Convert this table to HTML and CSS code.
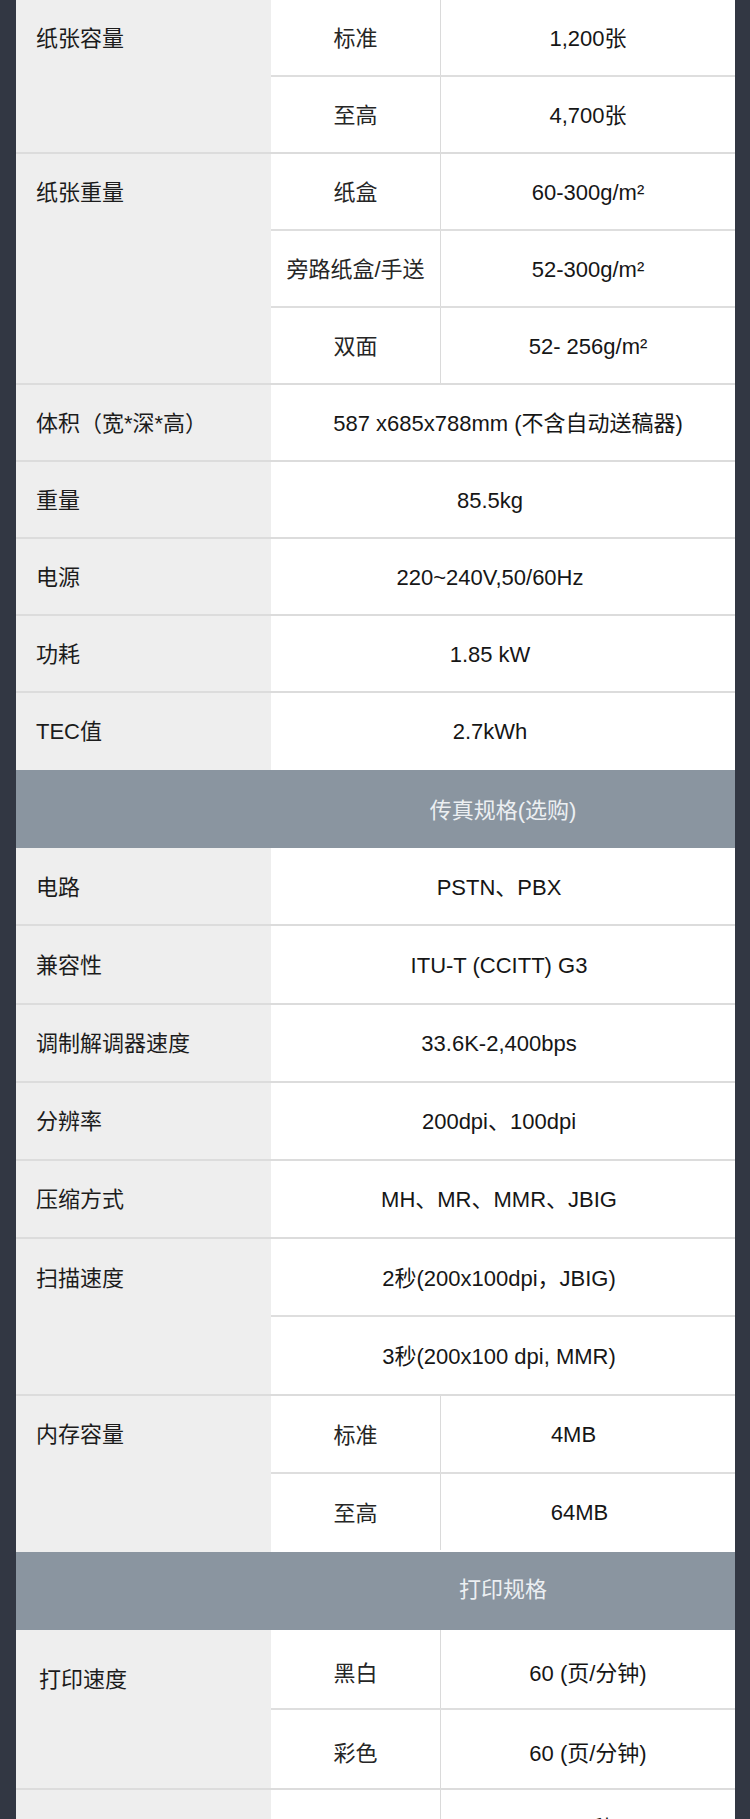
FILE: index.html
```html
<!DOCTYPE html>
<html lang="zh-CN">
<head>
<meta charset="utf-8">
<title>规格参数</title>
<link rel="stylesheet" href="styles.css">
</head>
<body>
<div class="sheet">
  <section class="sec sec1">
    <div class="row">
      <div class="label"><span class="lt">纸张容量</span></div>
      <div class="subs">
        <div class="sub"><div class="k">标准</div><div class="v">1,200张</div></div>
        <div class="sub"><div class="k">至高</div><div class="v">4,700张</div></div>
      </div>
    </div>
    <div class="row">
      <div class="label"><span class="lt">纸张重量</span></div>
      <div class="subs">
        <div class="sub"><div class="k">纸盒</div><div class="v">60-300g/m²</div></div>
        <div class="sub"><div class="k">旁路纸盒/手送</div><div class="v">52-300g/m²</div></div>
        <div class="sub"><div class="k">双面</div><div class="v">52- 256g/m²</div></div>
      </div>
    </div>
    <div class="row">
      <div class="label"><span class="lt">体积（宽*深*高）</span></div>
      <div class="full full-wide">587 x685x788mm (不含自动送稿器)</div>
    </div>
    <div class="row">
      <div class="label"><span class="lt">重量</span></div>
      <div class="full">85.5kg</div>
    </div>
    <div class="row">
      <div class="label"><span class="lt">电源</span></div>
      <div class="full">220~240V,50/60Hz</div>
    </div>
    <div class="row">
      <div class="label"><span class="lt">功耗</span></div>
      <div class="full">1.85 kW</div>
    </div>
    <div class="row row-last">
      <div class="label"><span class="lt">TEC值</span></div>
      <div class="full">2.7kWh</div>
    </div>
  </section>

  <div class="head head1"><span class="head-t">传真规格(选购)</span></div>

  <section class="sec sec2">
    <div class="row">
      <div class="label"><span class="lt">电路</span></div>
      <div class="full">PSTN、PBX</div>
    </div>
    <div class="row">
      <div class="label"><span class="lt">兼容性</span></div>
      <div class="full">ITU-T (CCITT) G3</div>
    </div>
    <div class="row">
      <div class="label"><span class="lt">调制解调器速度</span></div>
      <div class="full">33.6K-2,400bps</div>
    </div>
    <div class="row">
      <div class="label"><span class="lt">分辨率</span></div>
      <div class="full">200dpi、100dpi</div>
    </div>
    <div class="row">
      <div class="label"><span class="lt">压缩方式</span></div>
      <div class="full">MH、MR、MMR、JBIG</div>
    </div>
    <div class="row">
      <div class="label"><span class="lt">扫描速度</span></div>
      <div class="subs">
        <div class="sub"><div class="vv">2秒(200x100dpi，JBIG)</div></div>
        <div class="sub"><div class="vv">3秒(200x100 dpi, MMR)</div></div>
      </div>
    </div>
    <div class="row row-last">
      <div class="label"><span class="lt">内存容量</span></div>
      <div class="subs">
        <div class="sub"><div class="k">标准</div><div class="v v-mem1">4MB</div></div>
        <div class="sub"><div class="k">至高</div><div class="v v-mem2">64MB</div></div>
      </div>
    </div>
  </section>

  <div class="head head2"><span class="head-t">打印规格</span></div>

  <section class="sec sec3">
    <div class="row">
      <div class="label label-alt"><span class="lt">打印速度</span></div>
      <div class="subs">
        <div class="sub"><div class="k">黑白</div><div class="v">60 (页/分钟)</div></div>
        <div class="sub"><div class="k">彩色</div><div class="v">60 (页/分钟)</div></div>
      </div>
    </div>
    <div class="row">
      <div class="label label-alt"><span class="lt">首页输出时间</span></div>
      <div class="subs">
        <div class="sub sub-tall"><div class="k">黑白</div><div class="v v-two">3.7秒<br>(A4 纵向)</div></div>
        <div class="sub"><div class="k">彩色</div><div class="v">5.3秒</div></div>
      </div>
    </div>
  </section>
</div>
</body>
</html>
```

FILE: styles.css
```css
html, body {
  margin: 0;
  padding: 0;
}

body {
  background: #323743;
  font-family: "Liberation Sans", "Noto Sans CJK SC", sans-serif;
  font-size: 22px;
  color: #161616;
  overflow: hidden;
}

.sheet {
  margin: 0 15px 0 16px;
  background: #fff;
}

.sec1 { --h: 75px; }
.sec2 { --h: 76.2px; }
.sec3 { --h: 77.75px; }

.row {
  display: flex;
  border-bottom: 2px solid #dcdcdc;
}

.row-last {
  border-bottom: none;
}

.row-last .subs,
.row-last .label {
  padding-bottom: 2px;
}

.label {
  width: 255px;
  flex: none;
  box-sizing: border-box;
  background: #eeeeee;
  padding-left: 20px;
  color: #1c1c1c;
}

.lt {
  height: var(--h);
  display: flex;
  align-items: center;
  line-height: 1.2;
  padding-top: 3px;
  box-sizing: border-box;
}

.label-alt {
  padding-left: 23px;
}

.label-alt .lt {
  padding-top: 21px;
}

.subs {
  flex: 1;
  display: flex;
  flex-direction: column;
}

.sub {
  display: flex;
  height: var(--h);
}

.sub + .sub {
  border-top: 2px solid #dedede;
}

.k {
  width: 170px;
  flex: none;
  box-sizing: border-box;
  border-right: 1px solid #dadada;
  display: flex;
  align-items: center;
  justify-content: center;
  color: #262626;
  line-height: 1.2;
  padding-top: 4px;
}

.v,
.vv,
.full {
  flex: 1;
  display: flex;
  align-items: center;
  justify-content: center;
  padding-top: 3px;
  line-height: 1.2;
  box-sizing: border-box;
}

.sec3 .k {
  padding-top: 10px;
}

.sec3 .v {
  padding-top: 10px;
}

.full {
  height: var(--h);
}

.row-last .full {
  height: calc(var(--h) + 2px);
  padding-bottom: 2px;
}

.sec1 .full {
  padding-right: 26px;
}

.sec1 .full-wide {
  padding-right: 0;
  padding-left: 10px;
}

.sec2 .full,
.sec2 .vv {
  padding-right: 8px;
}

.v-mem1 {
  padding-right: 29px;
}

.v-mem2 {
  padding-right: 17px;
}

.sub-tall {
  height: 110px;
}

.sec3 .v-two {
  text-align: center;
  line-height: 32px;
  padding-top: 0;
}

.head {
  display: flex;
  align-items: center;
  justify-content: center;
  background: #8a95a0;
  color: #eceff2;
  padding-left: 255px;
  box-sizing: border-box;
}

.head1 {
  height: 78.3px;
  padding-bottom: 3px;
}

.head2 {
  height: 78.4px;
  padding-bottom: 8px;
}
```
